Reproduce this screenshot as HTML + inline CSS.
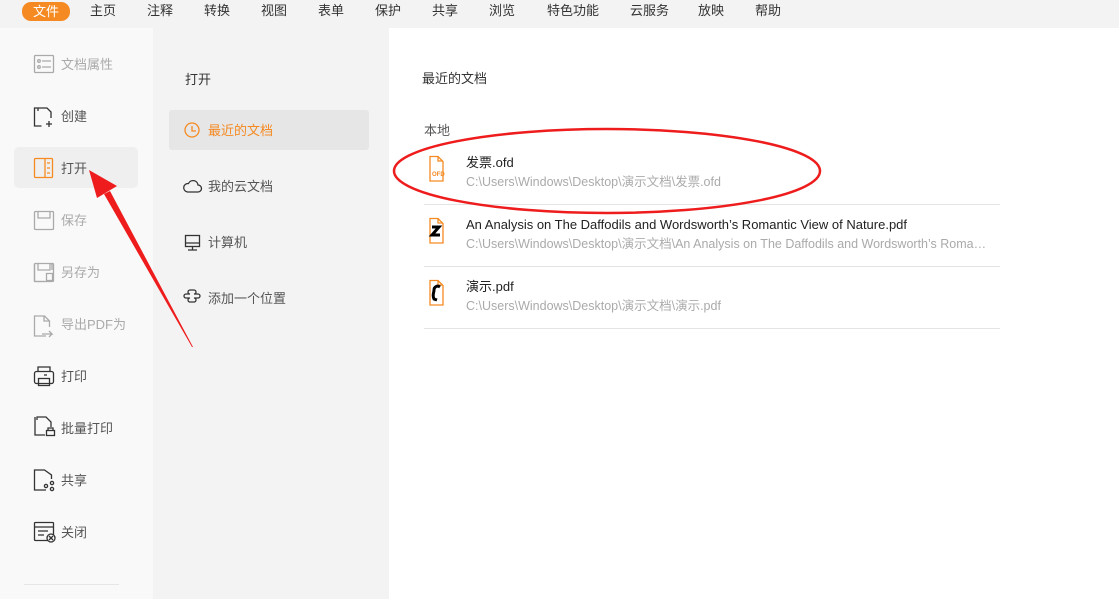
<!DOCTYPE html>
<html><head><meta charset="utf-8"><style>
*{margin:0;padding:0;box-sizing:border-box}
body{width:1119px;height:599px;overflow:hidden;background:#fff;font-family:"Liberation Sans","Noto Sans CJK SC",sans-serif;font-size:13px;color:#333;position:relative}
.top{position:absolute;left:0;top:0;width:1119px;height:28px;background:#f3f3f3}
.top span{position:absolute;top:3px;font-size:13px;color:#333;line-height:16px}
.top .act{background:#f58a22;color:#fff;border-radius:9px;left:22px;width:48px;text-align:center;top:2px;height:19px;line-height:19px}
.side{position:absolute;left:0;top:28px;width:153px;height:571px;background:#f9f9f9}
.mid{position:absolute;left:153px;top:28px;width:236px;height:571px;background:#f3f3f3}
.it{position:absolute;font-size:13px;color:#555;line-height:16px}
.dis{color:#aaa}
svg.ic{position:absolute}
.t{position:absolute;line-height:16px;white-space:nowrap}
.sep{position:absolute;left:424px;width:576px;height:1px;background:#e4e4e4}
</style></head><body>
<div class="top">
<span class="act">文件</span>
<span style="left:90px">主页</span><span style="left:147px">注释</span><span style="left:204px">转换</span><span style="left:261px">视图</span><span style="left:318px">表单</span><span style="left:375px">保护</span><span style="left:432px">共享</span><span style="left:489px">浏览</span><span style="left:547px">特色功能</span><span style="left:630px">云服务</span><span style="left:698px">放映</span><span style="left:755px">帮助</span>
</div>
<div class="side"></div>
<div class="mid"></div>
<div style="position:absolute;left:14px;top:147px;width:124px;height:41px;background:#efefef;border-radius:5px"></div>
<div style="position:absolute;left:24px;top:584px;width:95px;height:1px;background:#e6e6e6"></div>

<svg class="ic" style="left:0;top:0" width="160" height="560" fill="none" stroke-width="1.3">
<g stroke="#aaa"><rect x="34.5" y="55.5" width="19" height="17" rx="1"/><circle cx="39" cy="61" r="1.3"/><circle cx="39" cy="67" r="1.3"/><path d="M42 61h9M42 67h9"/></g>
<g stroke="#333"><path d="M40 108h-5.5v18h7M40 108h7l4 4v6"/><path d="M38 111v-3"/><path d="M49 121v6M46 124h6"/></g>
<g stroke="#f58a22"><rect x="34.5" y="158.5" width="18" height="19" rx="1"/><path d="M45 159v18M47 163h3M47 168h3M47 173h3"/></g>
<g stroke="#aaa"><rect x="34.5" y="211.5" width="19" height="18" rx="1"/><path d="M38 212v6h12v-6"/></g>
<g stroke="#aaa"><path d="M52 270v-6l-1-0M34.5 263.5v18h10"/><rect x="34.5" y="263.5" width="19" height="18" rx="1"/><path d="M38 264v6h12v-6"/><rect x="46.5" y="273.5" width="6" height="7"/></g>
<g stroke="#aaa"><path d="M46 336h-11.5v-20h10l5 5v6"/><path d="M44 316v5h5M42 334h10l-3-3M52 334l-3 3"/></g>
<g stroke="#333"><rect x="34.5" y="371.5" width="19" height="12" rx="2"/><path d="M38 371v-4h12v4"/><rect x="38.5" y="378.5" width="11" height="7"/><path d="M44 375h3"/></g>
<g stroke="#333"><path d="M37 420v-3h9l5 5v5M35 418v17h10"/><path d="M35 418v-1"/><rect x="46.5" y="430.5" width="8" height="5"/><path d="M48 430v-2h5v2"/></g>
<g stroke="#333"><path d="M46 490h-11.5v-20h10l7 5v4"/><circle cx="46" cy="486" r="1.6"/><circle cx="52" cy="483" r="1.6"/><circle cx="52" cy="489" r="1.6"/></g>
<g stroke="#333"><rect x="34.5" y="522.5" width="19" height="18" rx="1"/><path d="M35 527h18M38 531h10M38 535h6"/><circle cx="51" cy="538" r="4" fill="#f9f9f9"/><path d="M49 536l4 4M53 536l-4 4"/></g>
</svg>
<div class="it dis" style="left:61px;top:57px">文档属性</div>
<div class="it" style="left:61px;top:109px">创建</div>
<div class="it" style="left:61px;top:161px">打开</div>
<div class="it dis" style="left:61px;top:213px">保存</div>
<div class="it dis" style="left:61px;top:265px">另存为</div>
<div class="it dis" style="left:61px;top:317px">导出PDF为</div>
<div class="it" style="left:61px;top:369px">打印</div>
<div class="it" style="left:61px;top:421px">批量打印</div>
<div class="it" style="left:61px;top:473px">共享</div>
<div class="it" style="left:61px;top:525px">关闭</div>

<div class="it" style="left:185px;top:72px;color:#333">打开</div>
<div style="position:absolute;left:169px;top:110px;width:200px;height:40px;background:#e6e6e6;border-radius:3px"></div>
<svg class="ic" style="left:150px;top:100px" width="80" height="220" fill="none" stroke-width="1.3">
<g stroke="#f58a22"><circle cx="42" cy="30" r="7"/><path d="M42 26v5h4"/></g>
<path stroke="#333" d="M39 92h9a3.5 3.5 0 0 0 0-7a5 5 0 0 0 -9.5-1.5a4 4 0 0 0 -1 8.5z"/>
<g stroke="#333"><rect x="35.5" y="135.5" width="14" height="11"/><path d="M35 143h15M42.5 147v3M38 150h9"/></g>
<path stroke="#333" d="M40 190h4a2 2 0 0 1 0 4h4a2 2 0 0 1 0 4h-4a2 2 0 0 1 0 4h-4a2 2 0 0 1 0 -4h-4a2 2 0 0 1 0 -4h4a2 2 0 0 1 0 -4z"/>
</svg>
<div class="it" style="left:208px;top:123px;color:#f58a22">最近的文档</div>
<div class="it" style="left:208px;top:179px">我的云文档</div>
<div class="it" style="left:208px;top:235px">计算机</div>
<div class="it" style="left:208px;top:291px">添加一个位置</div>

<div class="t" style="left:422px;top:71px;color:#333">最近的文档</div>
<div class="t" style="left:424px;top:123px;color:#555">本地</div>

<svg class="ic" style="left:420px;top:150px" width="40" height="170" fill="none" stroke-width="1.3">
<g stroke="#f58a22"><path d="M10 6.5h8l5 5v19.5h-13z" fill="#fff"/><path d="M18 6v5h5"/></g>
<text x="12" y="26" font-size="6" fill="#f58a22" font-family="Liberation Sans" font-weight="bold">OFD</text>
<path stroke="#f58a22" d="M10 68.5h8l5 5v19.5h-13z"/><path stroke="#f58a22" d="M18 68v5h5"/>
<path stroke="#000" stroke-width="3" d="M12 77h7l-7 8h8"/>
<path stroke="#f58a22" d="M10 130.5h8l5 5v19.5h-13z"/><path stroke="#f58a22" d="M18 130v5h5"/>
<path stroke="#000" stroke-width="3" d="M20 137c-3-2-6 0-6 3s-2 5 0 9l3 1"/>
</svg>
<div class="t" style="left:466px;top:155px;color:#222">发票.ofd</div>
<div class="t" style="left:466px;top:174px;color:#aaa;font-size:12.5px">C:\Users\Windows\Desktop\演示文档\发票.ofd</div>
<div class="sep" style="top:204px"></div>
<div class="t" style="left:466px;top:217px;color:#222">An Analysis on The Daffodils and Wordsworth’s Romantic View of Nature.pdf</div>
<div class="t" style="left:466px;top:236px;color:#aaa;font-size:12.5px;width:524px;overflow:hidden;text-overflow:ellipsis">C:\Users\Windows\Desktop\演示文档\An Analysis on The Daffodils and Wordsworth’s Romantic View of Nature.pdf</div>
<div class="sep" style="top:266px"></div>
<div class="t" style="left:466px;top:279px;color:#222">演示.pdf</div>
<div class="t" style="left:466px;top:298px;color:#aaa;font-size:12.5px">C:\Users\Windows\Desktop\演示文档\演示.pdf</div>
<div class="sep" style="top:328px"></div>

<svg style="position:absolute;left:0;top:0" width="1119" height="599">
<ellipse cx="607" cy="171" rx="213" ry="42" fill="none" stroke="#ee1c1c" stroke-width="2.5"/>
<polygon points="193,347 192,347 104,194 110,191" fill="#ee1c1c"/>
<polygon points="89,170 97,198 117,186" fill="#ee1c1c"/>
</svg>
</body></html>
